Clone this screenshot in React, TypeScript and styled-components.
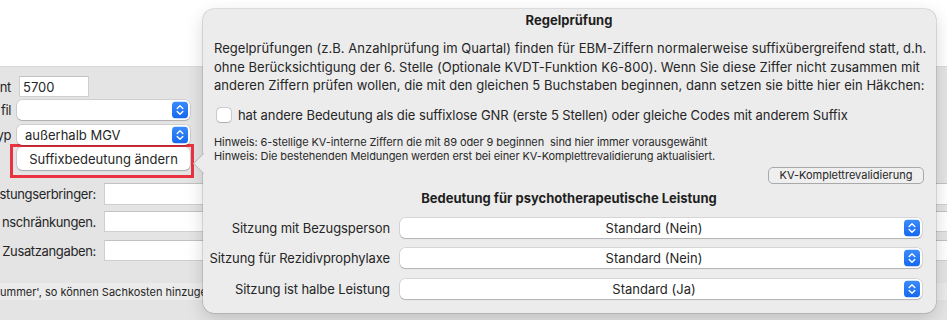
import React from "react";
import styled, { createGlobalStyle } from "styled-components";

const Global = createGlobalStyle`
  html, body { margin: 0; padding: 0; }
  body {
    font-family: Inter, "Liberation Sans", Arial, sans-serif;
    color: #262626;
    -webkit-font-smoothing: antialiased;
  }
`;

const Root = styled.div`
  position: relative;
  width: 947px;
  height: 320px;
  overflow: hidden;
  background: #e4e4e4;
  font-size: 13px;
`;

const TopBand = styled.div`
  height: 67px;
  background: #ffffff;
  border-bottom: 1px solid #d9d9d9;
  box-sizing: border-box;
`;

const Form = styled.div`
  display: flex;
  flex-direction: column;
`;

const Row = styled.div<{ $mt: number; $h: number; $labelW: number; $gap: number }>`
  display: flex;
  align-items: center;
  margin-top: ${(p) => p.$mt}px;
  height: ${(p) => p.$h}px;
  column-gap: ${(p) => p.$gap}px;
  & > :first-child {
    flex: 0 0 ${(p) => p.$labelW}px;
    min-width: 0;
  }
`;

const Label = styled.div`
  display: flex;
  justify-content: flex-end;
  min-width: 0;
  white-space: nowrap;
  font-size: 13px;
  letter-spacing: -0.35px;
  color: #262626;
`;

const TextField = styled.div<{ $w: number }>`
  width: ${(p) => p.$w}px;
  flex: 0 0 ${(p) => p.$w}px;
  height: 100%;
  box-sizing: border-box;
  background: #ffffff;
  border: 1px solid #cfcfcf;
  border-top-color: #c2c2c2;
  display: flex;
  align-items: center;
  padding-left: 3px;
  font-size: 13px;
`;

const PopupField = styled.div<{ $w: number; $center?: boolean }>`
  position: relative;
  width: ${(p) => (p.$w ? `${p.$w}px` : "auto")};
  flex: ${(p) => (p.$w ? `0 0 ${p.$w}px` : "1 1 auto")};
  height: 100%;
  box-sizing: border-box;
  background: #ffffff;
  border-radius: 5px;
  box-shadow: 0 0 0 0.5px rgba(0, 0, 0, 0.18), 0 1px 1px rgba(0, 0, 0, 0.16);
  display: flex;
  align-items: center;
  justify-content: ${(p) => (p.$center ? "center" : "flex-start")};
  padding: 0 22px 0 8px;
  font-size: 13px;
  color: #262626;
  white-space: nowrap;
`;

const StepperBox = styled.span`
  position: absolute;
  right: 2px;
  top: 50%;
  transform: translateY(-50%);
  width: 16px;
  height: 17px;
  display: flex;
`;

const Stepper = () => (
  <StepperBox>
    <svg width="16" height="17" viewBox="0 0 16 17">
      <defs>
        <linearGradient id="stg" x1="0" y1="0" x2="0" y2="1">
          <stop offset="0" stopColor="#3b8cfb" />
          <stop offset="1" stopColor="#1568ee" />
        </linearGradient>
      </defs>
      <rect x="0" y="0" width="16" height="17" rx="4" fill="url(#stg)" />
      <path d="M5.2 7 L8 4.3 L10.8 7" fill="none" stroke="#fff" strokeWidth="1.4" strokeLinecap="round" strokeLinejoin="round" />
      <path d="M5.2 10 L8 12.7 L10.8 10" fill="none" stroke="#fff" strokeWidth="1.4" strokeLinecap="round" strokeLinejoin="round" />
    </svg>
  </StepperBox>
);

const Highlight = styled.div`
  margin-left: 10px;
  width: 184px;
  height: 34px;
  box-sizing: border-box;
  border: 3px solid #ea3340;
  padding: 0 1px 5px 4px;
  display: flex;
`;

const PushButton = styled.div`
  flex: 1;
  height: 23px;
  box-sizing: border-box;
  background: #ffffff;
  border-radius: 5px;
  box-shadow: 0 0 0 0.5px rgba(0, 0, 0, 0.2), 0 1px 1px rgba(0, 0, 0, 0.18);
  display: flex;
  align-items: center;
  justify-content: center;
  font-size: 13px;
  color: #262626;
`;

const StatusLine = styled.div`
  margin-top: 22px;
  height: 17px;
  background: #ebebeb;
  display: flex;
  align-items: center;
  font-size: 11px;
  white-space: nowrap;
  color: #262626;
`;

const Popover = styled.div`
  position: absolute;
  left: 203px;
  top: 9px;
  width: 733px;
  height: 304px;
  box-sizing: border-box;
  background: #ececec;
  border-radius: 11px;
  box-shadow: 0 0 0 0.5px rgba(0, 0, 0, 0.22), 0 6px 18px rgba(0, 0, 0, 0.16);
  padding: 3px 12px 0 11px;
  display: flex;
  flex-direction: column;

  &::before {
    content: "";
    position: absolute;
    left: -7px;
    top: 147px;
    width: 14px;
    height: 14px;
    background: #ececec;
    transform: rotate(45deg);
    border-left: 0.5px solid rgba(0, 0, 0, 0.2);
    border-bottom: 0.5px solid rgba(0, 0, 0, 0.2);
  }
`;

const Heading = styled.div<{ $mt: number }>`
  margin-top: ${(p) => p.$mt}px;
  text-align: center;
  font-weight: 700;
  font-size: 13px;
  line-height: 16px;
  color: #1f1f1f;
`;

const Paragraph = styled.div`
  margin-top: 11px;
  font-size: 13px;
  line-height: 18.5px;
  letter-spacing: 0.03px;
  white-space: nowrap;
`;

const CheckRow = styled.label`
  margin-top: 12px;
  height: 16px;
  display: flex;
  align-items: center;
  gap: 7px;
  padding-left: 3px;
  font-size: 13px;
  letter-spacing: -0.08px;
  white-space: nowrap;
`;

const CheckBox = styled.span`
  width: 14px;
  height: 14px;
  box-sizing: border-box;
  border-radius: 3.5px;
  background: #ffffff;
  box-shadow: 0 0 0 0.5px rgba(0, 0, 0, 0.25), 0 0.5px 1px rgba(0, 0, 0, 0.15);
`;

const Hints = styled.div`
  margin-top: 12px;
  font-size: 11px;
  line-height: 14px;
  letter-spacing: -0.08px;
  white-space: pre;
  color: #2a2a2a;
`;

const SmallButtonRow = styled.div`
  margin-top: 4px;
  display: flex;
  justify-content: flex-end;
`;

const SmallButton = styled.div`
  width: 156px;
  height: 17px;
  box-sizing: border-box;
  border: 1px solid #a9a9a9;
  border-radius: 5px;
  background: #efefef;
  display: flex;
  align-items: center;
  justify-content: center;
  font-size: 11px;
  color: #262626;
`;

const Rows = styled.div`
  margin-top: 12px;
  display: flex;
  flex-direction: column;
  gap: 10.5px;
  padding-right: 2px;
`;

const MeaningRow = styled.div`
  display: flex;
  align-items: center;
  height: 20px;
  gap: 10px;
`;

const MeaningLabel = styled.div`
  flex: 0 0 176px;
  min-width: 0;
  display: flex;
  justify-content: flex-end;
  white-space: nowrap;
  font-size: 13px;
  letter-spacing: -0.1px;
`;

const meanings = [
  { label: "Sitzung mit Bezugsperson", value: "Standard (Nein)" },
  { label: "Sitzung für Rezidivprophylaxe", value: "Standard (Nein)" },
  { label: "Sitzung ist halbe Leistung", value: "Standard (Ja)" },
];

export default function App() {
  return (
    <Root>
      <Global />
      <TopBand />
      <Form>
        <Row $mt={9} $h={21} $labelW={11} $gap={8}>
          <Label>nt</Label>
          <TextField $w={70}>5700</TextField>
        </Row>
        <Row $mt={3} $h={20} $labelW={11} $gap={6}>
          <Label>fil</Label>
          <PopupField $w={173}>
            <Stepper />
          </PopupField>
        </Row>
        <Row $mt={5} $h={20} $labelW={11} $gap={6}>
          <Label>yp</Label>
          <PopupField $w={173}>
            außerhalb MGV
            <Stepper />
          </PopupField>
        </Row>
        <Row $mt={-1} $h={34} $labelW={0} $gap={0}>
          <span />
          <Highlight>
            <PushButton>Suffixbedeutung ändern</PushButton>
          </Highlight>
        </Row>
        <Row $mt={5} $h={22} $labelW={96} $gap={8}>
          <Label>stungserbringer:</Label>
          <TextField $w={900} />
        </Row>
        <Row $mt={6} $h={21} $labelW={96} $gap={8}>
          <Label>nschränkungen.</Label>
          <TextField $w={900} />
        </Row>
        <Row $mt={8} $h={21} $labelW={96} $gap={8}>
          <Label>Zusatzangaben:</Label>
          <TextField $w={900} />
        </Row>
        <StatusLine>ummer', so können Sachkosten hinzuge</StatusLine>
      </Form>

      <Popover>
        <Heading $mt={0}>Regelprüfung</Heading>
        <Paragraph>
          Regelprüfungen (z.B. Anzahlprüfung im Quartal) finden für EBM-Ziffern normalerweise suffixübergreifend statt, d.h.
          <br />
          ohne Berücksichtigung der 6. Stelle (Optionale KVDT-Funktion K6-800). Wenn Sie diese Ziffer nicht zusammen mit
          <br />
          anderen Ziffern prüfen wollen, die mit den gleichen 5 Buchstaben beginnen, dann setzen sie bitte hier ein Häkchen:
        </Paragraph>
        <CheckRow>
          <CheckBox />
          hat andere Bedeutung als die suffixlose GNR (erste 5 Stellen) oder gleiche Codes mit anderem Suffix
        </CheckRow>
        <Hints>
          {"Hinweis: 6-stellige KV-interne Ziffern die mit 89 oder 9 beginnen  sind hier immer vorausgewählt\nHinweis: Die bestehenden Meldungen werden erst bei einer KV-Komplettrevalidierung aktualisiert."}
        </Hints>
        <SmallButtonRow>
          <SmallButton>KV-Komplettrevalidierung</SmallButton>
        </SmallButtonRow>
        <Heading $mt={6}>Bedeutung für psychotherapeutische Leistung</Heading>
        <Rows>
          {meanings.map((m) => (
            <MeaningRow key={m.label}>
              <MeaningLabel>{m.label}</MeaningLabel>
              <PopupField $w={0} $center>
                {m.value}
                <Stepper />
              </PopupField>
            </MeaningRow>
          ))}
        </Rows>
      </Popover>
    </Root>
  );
}
